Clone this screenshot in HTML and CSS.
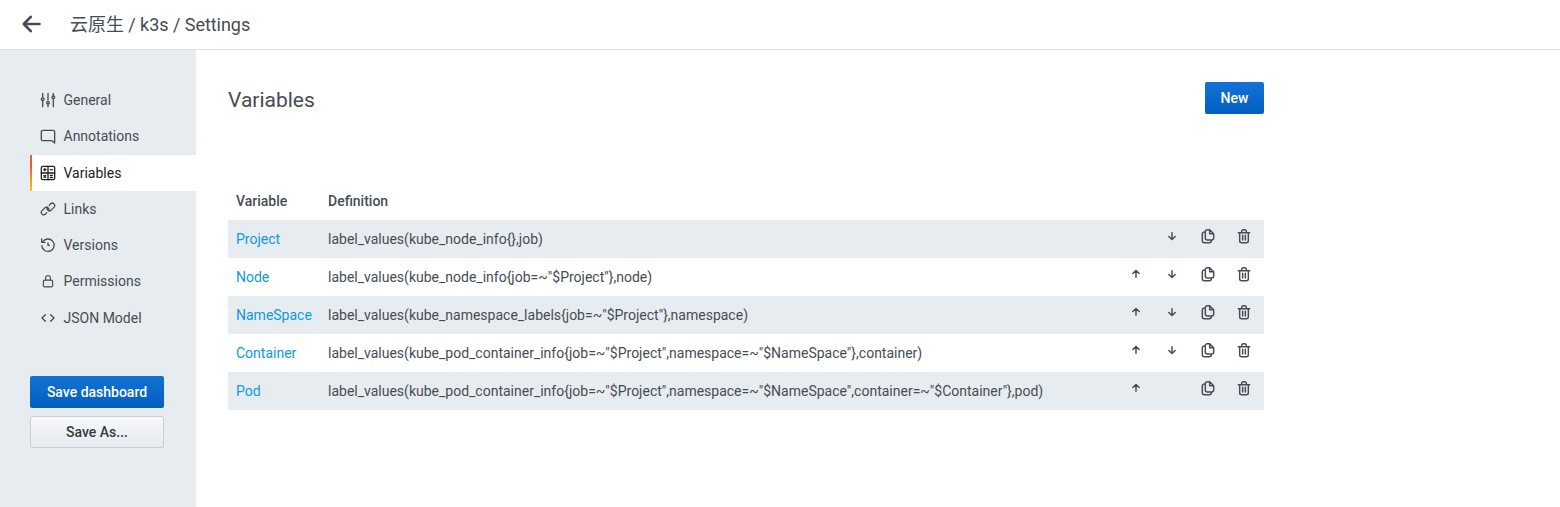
FILE: index.html
```html
<!DOCTYPE html>
<html lang="en">
<head>
<meta charset="utf-8">
<title>Settings</title>
<link rel="stylesheet" href="styles.css">
</head>
<body>
<svg class="sprite" aria-hidden="true">
  <symbol id="back" viewBox="0 0 24 24"><path d="M19.500 12H4M10.800 4.800L3.800 12l7 7.200"/></symbol>
  <symbol id="sliders" viewBox="0 0 24 24"><path d="M4 2v6M4 14v8M12 2v10M12 18v4M20 2v3M20 11v11"/><circle cx="4" cy="11" r="2"/><circle cx="12" cy="16" r="2"/><circle cx="20" cy="8" r="2"/></symbol>
  <symbol id="comment" viewBox="0 0 24 24"><path d="M4 3.500h16a2 2 0 0 1 2 2V22.500l-4-3.500H4a2 2 0 0 1-2-2V5.500a2 2 0 0 1 2-2z"/></symbol>
  <symbol id="calc" viewBox="0 0 24 24"><rect x="2" y="2" width="20" height="20" rx="2"/><path d="M12 2v20M2 12h20M5.500 7h3.500M7.200 5.200v3.600M15.500 7h3M5.800 15.800l2.800 2.800M8.600 15.800l-2.800 2.800M15.500 15.600h3M15.500 18.800h3"/></symbol>
  <symbol id="link" viewBox="0 0 24 24"><path d="M10 17.500l-2 2.500a3.700 3.700 0 0 1-5.200-5.200l4.500-4.500a3.700 3.700 0 0 1 5.600 4.700M14 6.500l2-2.500a3.700 3.700 0 0 1 5.200 5.200l-4.500 4.500a3.700 3.700 0 0 1-5.600-4.700"/></symbol>
  <symbol id="history" viewBox="0 0 24 24"><path d="M2.500 3v5h5M4 7.500A9.300 9.300 0 1 1 2.700 13M12 9v3.500h2"/></symbol>
  <symbol id="lock" viewBox="0 0 24 24"><rect x="4" y="10.500" width="16" height="11.500" rx="2.500"/><path d="M8 10.500V6.500a4 4 0 0 1 8 0v4"/></symbol>
  <symbol id="code" viewBox="0 0 24 24"><path d="M8 7l-5 5 5 5M16 7l5 5-5 5"/></symbol>
  <symbol id="up" viewBox="0 0 24 24"><path d="M12 17V7M7.200 11.300L12 6.800l4.800 4.500"/></symbol>
  <symbol id="down" viewBox="0 0 24 24"><path d="M12 7v10M7.200 12.700L12 17.200l4.800-4.500"/></symbol>
  <symbol id="copy" viewBox="0 0 24 24"><path d="M14.500 2.500H11a3 3 0 0 0-3 3V15a3 3 0 0 0 3 3h6.500a3 3 0 0 0 3-3V8.500zM14.500 2.500v6h6M8 6H6.500a3 3 0 0 0-3 3v10a3 3 0 0 0 3 3H14a3 3 0 0 0 3-3v-1"/></symbol>
  <symbol id="trash" viewBox="0 0 24 24"><path d="M3.500 7h17M5.500 7v12a3 3 0 0 0 3 3h7a3 3 0 0 0 3-3V7M8.500 6.500V5a2.500 2.500 0 0 1 2.500-2.500h2A2.500 2.500 0 0 1 15.500 5v1.500M10 11v7M14 11v7"/></symbol>
</svg>
<header class="topbar">
  <svg class="icon icon-back"><use href="#back"/></svg>
  <h1 class="page-title">云原生 / k3s / Settings</h1>
</header>
<div class="layout">
  <aside class="sidebar">
    <nav class="nav">
      <a class="nav-item"><svg class="icon"><use href="#sliders"/></svg>General</a>
      <a class="nav-item"><svg class="icon"><use href="#comment"/></svg>Annotations</a>
      <a class="nav-item active"><svg class="icon"><use href="#calc"/></svg>Variables</a>
      <a class="nav-item"><svg class="icon"><use href="#link"/></svg>Links</a>
      <a class="nav-item"><svg class="icon"><use href="#history"/></svg>Versions</a>
      <a class="nav-item"><svg class="icon icon-lock"><use href="#lock"/></svg>Permissions</a>
      <a class="nav-item"><svg class="icon"><use href="#code"/></svg>JSON Model</a>
    </nav>
    <div class="actions">
      <button class="btn btn-primary">Save dashboard</button>
      <button class="btn btn-secondary">Save As...</button>
    </div>
  </aside>
  <main class="content">
    <div class="content-head">
      <h2 class="section-title">Variables</h2>
      <button class="btn btn-primary btn-new">New</button>
    </div>
    <div class="table">
      <div class="row row-head"><span>Variable</span><span>Definition</span></div>
      <div class="row"><a class="name">Project</a><span>label_values(kube_node_info{},job)</span><div class="tools"><i></i><svg class="icon"><use href="#down"/></svg><svg class="icon"><use href="#copy"/></svg><svg class="icon"><use href="#trash"/></svg></div></div>
      <div class="row"><a class="name">Node</a><span>label_values(kube_node_info{job=~"$Project"},node)</span><div class="tools"><svg class="icon"><use href="#up"/></svg><svg class="icon"><use href="#down"/></svg><svg class="icon"><use href="#copy"/></svg><svg class="icon"><use href="#trash"/></svg></div></div>
      <div class="row"><a class="name">NameSpace</a><span>label_values(kube_namespace_labels{job=~"$Project"},namespace)</span><div class="tools"><svg class="icon"><use href="#up"/></svg><svg class="icon"><use href="#down"/></svg><svg class="icon"><use href="#copy"/></svg><svg class="icon"><use href="#trash"/></svg></div></div>
      <div class="row"><a class="name">Container</a><span>label_values(kube_pod_container_info{job=~"$Project",namespace=~"$NameSpace"},container)</span><div class="tools"><svg class="icon"><use href="#up"/></svg><svg class="icon"><use href="#down"/></svg><svg class="icon"><use href="#copy"/></svg><svg class="icon"><use href="#trash"/></svg></div></div>
      <div class="row"><a class="name">Pod</a><span>label_values(kube_pod_container_info{job=~"$Project",namespace=~"$NameSpace",container=~"$Container"},pod)</span><div class="tools"><svg class="icon"><use href="#up"/></svg><i></i><svg class="icon"><use href="#copy"/></svg><svg class="icon"><use href="#trash"/></svg></div></div>
    </div>
  </main>
</div>
</body>
</html>
```
FILE: styles.css
```css
* { box-sizing: border-box; }
body {
  margin: 0;
  height: 507px;
  overflow: hidden;
  display: flex;
  flex-direction: column;
  background: #fff;
  color: #464c54;
  font: 14px/20px Roboto, "Noto Sans CJK SC", sans-serif;
}
.sprite { display: none; }
.icon {
  width: 16px;
  height: 16px;
  flex: none;
  fill: none;
  stroke: currentColor;
  stroke-width: 2;
  stroke-linecap: round;
  stroke-linejoin: round;
}
.topbar {
  height: 50px;
  flex: none;
  display: flex;
  align-items: center;
  gap: 26px;
  padding: 0 0 1px 20px;
  border-bottom: 1px solid #dce1e6;
}
.icon-back { width: 24px; height: 24px; stroke-width: 2.600; }
.page-title { margin: 1px 0 0; font-size: 18px; font-weight: 400; line-height: 24px; letter-spacing: -0.040px; }
.layout { display: flex; flex: 1; min-height: 0; }
.sidebar {
  width: 196px;
  padding: 32px 0 0 30px;
  background: #e7ecf0;
}
.nav { display: flex; flex-direction: column; }
.nav-item {
  height: 36.250px;
  display: flex;
  align-items: center;
  gap: 7.500px;
  padding-left: 10px;
}
.nav-item.active {
  padding-left: 8px;
  border-left: 2px solid;
  border-image: linear-gradient(#f05a28 30%, #fbca0a) 1;
  background: #fff;
  color: #202226;
}
.icon-lock { padding: 1px; }
.actions {
  width: 134px;
  display: flex;
  flex-direction: column;
  gap: 8px;
  margin-top: 40.250px;
}
.btn {
  height: 32px;
  padding: 0 15px;
  border: 0;
  border-radius: 2px;
  font: 500 14px/30px Roboto, sans-serif;
  white-space: nowrap;
}
.btn-primary { background: linear-gradient(#1472d6, #005fbf); color: #fff; }
.btn-new { width: 59px; }
.btn-secondary {
  border: 1px solid #c7d0d9;
  background: linear-gradient(#f7f8fa, #e6e9ef);
  color: #343b40;
}
.content { width: 1068px; padding: 32px 0 0 32px; }
.content-head { display: flex; justify-content: space-between; }
.section-title { margin: 5px 0 0; font-size: 21px; font-weight: 400; line-height: 26px; }
.table { margin-top: 68px; }
.row {
  height: 38px;
  display: grid;
  grid-template-columns: 92px 1fr auto;
  align-items: center;
  padding: 0 12px 0 8px;
  white-space: nowrap;
}
.row:nth-child(even) { background: #e7ecf0; }
.row-head { font-weight: 500; }
.name { color: #0f99dc; }
.tools { display: grid; grid-template-columns: repeat(4, 16px); gap: 20px; height: 22px; }
.tools .icon { stroke-width: 2.200; }
```
